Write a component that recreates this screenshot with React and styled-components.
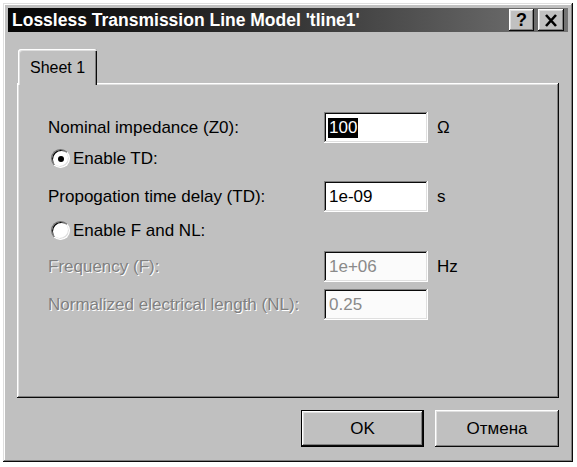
import styled, { createGlobalStyle } from "styled-components";

const GlobalStyle = createGlobalStyle`
  html, body {
    margin: 0;
    padding: 0;
    background: #fff;
  }
  body {
    font-family: "Liberation Sans", Arial, sans-serif;
    color: #000;
  }
`;

const raised = `
  box-shadow: inset -1px -1px #0a0a0a, inset 1px 1px #fff,
    inset -2px -2px #808080, inset 2px 2px #dfdfdf;
`;

const sunken = `
  box-shadow: inset -1px -1px #fff, inset 1px 1px #808080,
    inset -2px -2px #dfdfdf, inset 2px 2px #0a0a0a;
`;

const Page = styled.div`
  padding: 3px 0 0 3px;
`;

const Window = styled.div`
  box-sizing: border-box;
  width: 570px;
  height: 459px;
  padding: 5px;
  background: #c0c0c0;
  display: flex;
  flex-direction: column;
  box-shadow: inset -1px -1px #0a0a0a, inset 1px 1px #dfdfdf,
    inset -2px -2px #808080, inset 2px 2px #fff;
`;

const TitleBar = styled.div`
  height: 24px;
  display: flex;
  align-items: center;
  padding: 0 4px;
  background: linear-gradient(to right, #050505 0%, #2e2e2e 45%, #747474 100%);
`;

const Title = styled.div`
  flex: 1;
  color: #fff;
  font-weight: bold;
  font-size: 17.5px;
  white-space: nowrap;
`;

const TitleButton = styled.div`
  box-sizing: border-box;
  width: ${(p) => p.$w}px;
  height: 22px;
  margin-left: 4px;
  background: #c0c0c0;
  display: flex;
  align-items: center;
  justify-content: center;
  font-weight: bold;
  font-size: 18px;
  ${raised}
`;

const Body = styled.div`
  display: flex;
  flex-direction: column;
  padding: 17px 9px 0 9px;
`;

const Tabs = styled.div`
  display: flex;
  padding-left: 1px;
`;

const Tab = styled.div`
  box-sizing: border-box;
  position: relative;
  z-index: 1;
  width: 79px;
  height: 36px;
  margin-bottom: -2px;
  padding: 2px 0 0 12px;
  display: flex;
  align-items: center;
  font-size: 16px;
  background: #c0c0c0;
  border-radius: 3px 3px 0 0;
  box-shadow: inset 1px 1px #fff, inset 2px 2px #dfdfdf, inset -1px 0 #0a0a0a,
    inset -2px 0 #808080;
`;

const Panel = styled.div`
  box-sizing: border-box;
  height: 315px;
  padding: 29px 0 0 31px;
  display: flex;
  flex-direction: column;
  ${raised}
`;

const Row = styled.div`
  display: flex;
  align-items: center;
  height: 31px;
  margin-top: ${(p) => p.$mt || 0}px;
  font-size: 17px;
`;

const Label = styled.div`
  width: 276px;
  white-space: nowrap;
  color: ${(p) => (p.$disabled ? "#808080" : "#000")};
  text-shadow: ${(p) => (p.$disabled ? "1px 1px 0 #fff" : "none")};
`;

const Field = styled.div`
  box-sizing: border-box;
  width: 104px;
  height: 31px;
  padding: 1px 0 0 5px;
  display: flex;
  align-items: center;
  background: ${(p) => (p.$disabled ? "#fbfbfb" : "#fff")};
  color: ${(p) => (p.$disabled ? "#8a8a8a" : "#000")};
  ${sunken}
`;

const Selected = styled.span`
  background: #000;
  color: #fff;
  padding: 0 1px;
  margin-left: -1px;
  line-height: 20px;
`;

const Unit = styled.div`
  margin-left: 9px;
`;

const Radio = styled.span`
  box-sizing: border-box;
  width: 19px;
  height: 19px;
  margin-left: 3px;
  border-radius: 50%;
  border: 1px solid;
  border-color: #6a6a6a #fff #fff #6a6a6a;
  box-shadow: inset 1px 1px 0 #0a0a0a, inset -1px -1px 0 #dfdfdf;
  display: flex;
  align-items: center;
  justify-content: center;
  background: #fff;

  &::after {
    content: "";
    width: 6px;
    height: 6px;
    border-radius: 50%;
    background: ${(p) => (p.$checked ? "#000" : "transparent")};
  }
`;

const RadioText = styled.span`
  margin-left: 3px;
`;

const Buttons = styled.div`
  display: flex;
  justify-content: flex-end;
  gap: 11px;
  margin-top: 12px;
`;

const Button = styled.div`
  box-sizing: border-box;
  width: ${(p) => p.$w}px;
  height: 37px;
  display: flex;
  align-items: center;
  justify-content: center;
  font-size: 17px;
  background: #c0c0c0;
  border: ${(p) => (p.$default ? "1px solid #000" : "none")};
  ${raised}
`;

function CloseGlyph() {
  return (
    <svg width="14" height="13" viewBox="0 0 14 13">
      <path d="M2 1 L12 12 M12 1 L2 12" stroke="#000" strokeWidth="2.6" />
    </svg>
  );
}

export default function App() {
  return (
    <Page>
      <GlobalStyle />
      <Window>
        <TitleBar>
          <Title>Lossless Transmission Line Model 'tline1'</Title>
          <TitleButton $w={25}>?</TitleButton>
          <TitleButton $w={26}>
            <CloseGlyph />
          </TitleButton>
        </TitleBar>
        <Body>
          <Tabs>
            <Tab>Sheet 1</Tab>
          </Tabs>
          <Panel>
            <Row>
              <Label>Nominal impedance (Z0):</Label>
              <Field>
                <Selected>100</Selected>
              </Field>
              <Unit>Ω</Unit>
            </Row>
            <Row>
              <Radio $checked />
              <RadioText>Enable TD:</RadioText>
            </Row>
            <Row $mt={7}>
              <Label>Propogation time delay (TD):</Label>
              <Field>1e-09</Field>
              <Unit>s</Unit>
            </Row>
            <Row $mt={3}>
              <Radio />
              <RadioText>Enable F and NL:</RadioText>
            </Row>
            <Row $mt={5}>
              <Label $disabled>Frequency (F):</Label>
              <Field $disabled>1e+06</Field>
              <Unit>Hz</Unit>
            </Row>
            <Row $mt={7}>
              <Label $disabled>Normalized electrical length (NL):</Label>
              <Field $disabled>0.25</Field>
            </Row>
          </Panel>
          <Buttons>
            <Button $w={123} $default>
              OK
            </Button>
            <Button $w={124}>Отмена</Button>
          </Buttons>
        </Body>
      </Window>
    </Page>
  );
}
